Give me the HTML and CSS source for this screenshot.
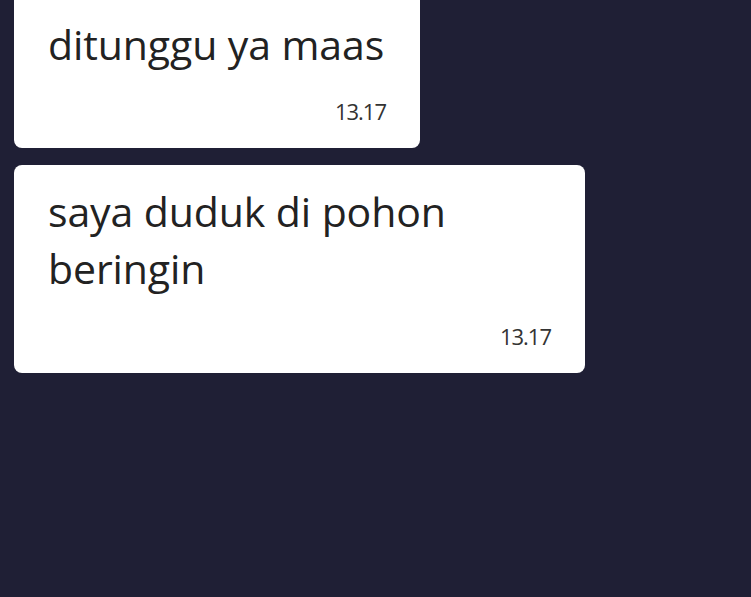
FILE: index.html
```html
<!DOCTYPE html>
<html lang="id">
<head>
    <meta charset="UTF-8">
    <meta name="viewport" content="width=device-width, initial-scale=1.0">
    <title>Chat</title>
    <link rel="stylesheet" href="styles.css">
</head>
<body>
    <div class="chat">
        <div class="bubble first">
            <div class="text">ditunggu ya maas</div>
            <div class="time">13.17</div>
        </div>
        <div class="bubble wide">
            <div class="text">saya duduk di pohon<br>beringin</div>
            <div class="time">13.17</div>
        </div>
    </div>
</body>
</html>
```

FILE: styles.css
```css
body {
    margin: 0;
    padding: 0;
    background-color: #1f1f35;
    font-family: 'Open Sans', 'Noto Sans', sans-serif;
    height: 597px;
    overflow: hidden;
}

.chat {
    display: flex;
    flex-direction: column;
    align-items: flex-start;
    gap: 17px;
    padding: 0 14px;
    margin-top: -8px;
}

.bubble {
    background: #ffffff;
    border-radius: 8px;
    padding: 24px 34px 22px 34px;
    box-sizing: border-box;
    display: flex;
    flex-direction: column;
}

.bubble.first {
    width: 406px;
    height: 156px;
}

.bubble.wide {
    width: 571px;
    height: 208px;
    padding-top: 18px;
}

.text {
    font-size: 41px;
    line-height: 57px;
    color: #222222;
    letter-spacing: -0.1px;
}

.time {
    margin-top: auto;
    align-self: flex-end;
    font-size: 22px;
    color: #333333;
    letter-spacing: -1px;
}
```
